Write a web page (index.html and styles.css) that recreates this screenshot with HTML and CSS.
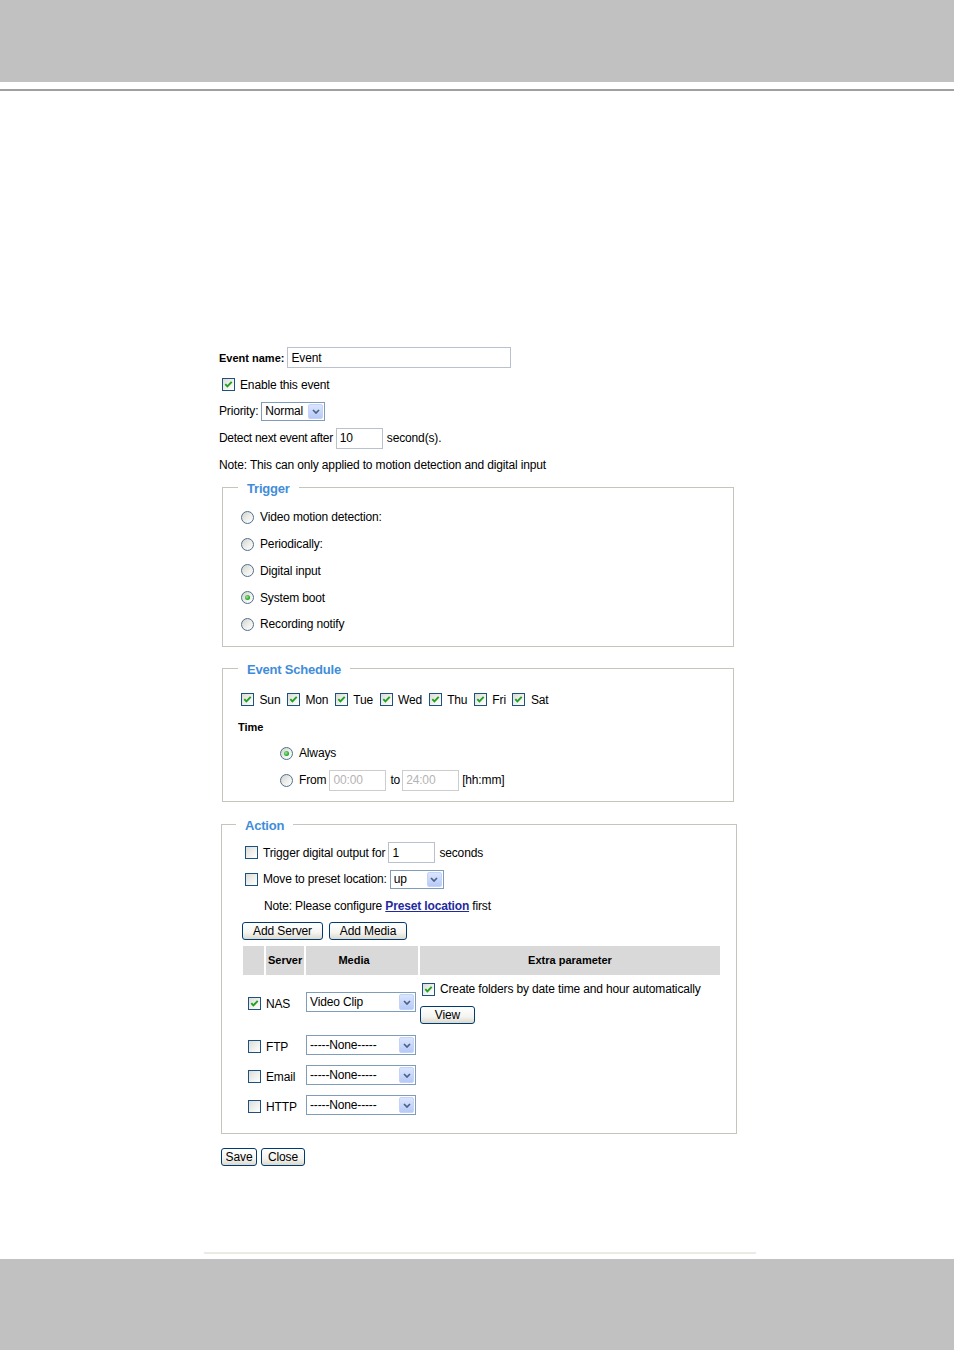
FILE: index.html
```html
<!DOCTYPE html>
<html lang="en">
<head>
<meta charset="utf-8">
<title>Event settings</title>
<link rel="stylesheet" href="styles.css">
</head>
<body>
<div class="page">
  <header class="top-band"></header>
  <div class="top-rule"></div>

  <main class="content">
    <div class="row"><span class="label-b">Event name:</span><span class="field w-name">Event</span></div>
    <div class="row pad-enable"><span class="cb on"><svg viewBox="0 0 11 11"><path d="M2.3 5.2 L4.4 7.4 L8.7 2.9"/></svg></span><span>Enable this event</span></div>
    <div class="row"><span>Priority:</span><span class="sel w-pri"><span class="sel-text">Normal</span><span class="sel-btn"><svg viewBox="0 0 8 5"><path d="M1 1 L4 4 L7 1"/></svg></span></span></div>
    <div class="row"><span class="tight-text">Detect next event after</span><span class="field w-num">10</span><span>second(s).</span></div>
    <div class="row"><span>Note: This can only applied to motion detection and digital input</span></div>

    <fieldset class="box box-trigger">
      <legend>Trigger</legend>
      <div class="row pad-radio"><span class="rb"></span><span>Video motion detection:</span></div>
      <div class="row pad-radio"><span class="rb"></span><span>Periodically:</span></div>
      <div class="row pad-radio"><span class="rb"></span><span>Digital input</span></div>
      <div class="row pad-radio"><span class="rb on"></span><span>System boot</span></div>
      <div class="row pad-radio"><span class="rb"></span><span>Recording notify</span></div>
    </fieldset>

    <fieldset class="box box-schedule">
      <legend>Event Schedule</legend>
      <div class="row pad-radio">
        <span class="day"><span class="cb on"><svg viewBox="0 0 11 11"><path d="M2.3 5.2 L4.4 7.4 L8.7 2.9"/></svg></span>Sun</span>
        <span class="day"><span class="cb on"><svg viewBox="0 0 11 11"><path d="M2.3 5.2 L4.4 7.4 L8.7 2.9"/></svg></span>Mon</span>
        <span class="day"><span class="cb on"><svg viewBox="0 0 11 11"><path d="M2.3 5.2 L4.4 7.4 L8.7 2.9"/></svg></span>Tue</span>
        <span class="day"><span class="cb on"><svg viewBox="0 0 11 11"><path d="M2.3 5.2 L4.4 7.4 L8.7 2.9"/></svg></span>Wed</span>
        <span class="day"><span class="cb on"><svg viewBox="0 0 11 11"><path d="M2.3 5.2 L4.4 7.4 L8.7 2.9"/></svg></span>Thu</span>
        <span class="day"><span class="cb on"><svg viewBox="0 0 11 11"><path d="M2.3 5.2 L4.4 7.4 L8.7 2.9"/></svg></span>Fri</span>
        <span class="day"><span class="cb on"><svg viewBox="0 0 11 11"><path d="M2.3 5.2 L4.4 7.4 L8.7 2.9"/></svg></span>Sat</span>
      </div>
      <div class="row pad-time"><span class="label-b">Time</span></div>
      <div class="row pad-always"><span class="rb on"></span><span>Always</span></div>
      <div class="row pad-always"><span class="rb"></span><span>From</span><span class="field off w-time">00:00</span><span>to</span><span class="field off w-time tight">24:00</span><span>[hh:mm]</span></div>
    </fieldset>

    <fieldset class="box box-action">
      <legend>Action</legend>
      <div class="row pad-act"><span class="cb"></span><span>Trigger digital output for</span><span class="field w-num">1</span><span>seconds</span></div>
      <div class="row pad-act"><span class="cb"></span><span>Move to preset location:</span><span class="sel w-up"><span class="sel-text">up</span><span class="sel-btn"><svg viewBox="0 0 8 5"><path d="M1 1 L4 4 L7 1"/></svg></span></span></div>
      <div class="row pad-note"><span>Note: Please configure <a class="link" href="#">Preset location</a> first</span></div>
      <div class="row btn-row">
        <button class="btn btn-server" type="button">Add Server</button>
        <button class="btn btn-media" type="button">Add Media</button>
      </div>

      <div class="media-table">
        <div class="th"></div>
        <div class="th th-server">Server</div>
        <div class="th th-media">Media</div>
        <div class="th">Extra parameter</div>

        <div class="td td-check"><span class="cb on"><svg viewBox="0 0 11 11"><path d="M2.3 5.2 L4.4 7.4 L8.7 2.9"/></svg></span></div>
        <div class="td">NAS</div>
        <div class="td"><span class="sel w-media"><span class="sel-text">Video Clip</span><span class="sel-btn"><svg viewBox="0 0 8 5"><path d="M1 1 L4 4 L7 1"/></svg></span></span></div>
        <div class="td td-extra">
          <div class="extra-line"><span class="cb on"><svg viewBox="0 0 11 11"><path d="M2.3 5.2 L4.4 7.4 L8.7 2.9"/></svg></span><span>Create folders by date time and hour automatically</span></div>
          <button class="btn btn-view" type="button">View</button>
        </div>

        <div class="td td-check"><span class="cb"></span></div>
        <div class="td">FTP</div>
        <div class="td"><span class="sel w-media"><span class="sel-text">-----None-----</span><span class="sel-btn"><svg viewBox="0 0 8 5"><path d="M1 1 L4 4 L7 1"/></svg></span></span></div>
        <div class="td"></div>

        <div class="td td-check"><span class="cb"></span></div>
        <div class="td">Email</div>
        <div class="td"><span class="sel w-media"><span class="sel-text">-----None-----</span><span class="sel-btn"><svg viewBox="0 0 8 5"><path d="M1 1 L4 4 L7 1"/></svg></span></span></div>
        <div class="td"></div>

        <div class="td td-check"><span class="cb"></span></div>
        <div class="td">HTTP</div>
        <div class="td"><span class="sel w-media"><span class="sel-text">-----None-----</span><span class="sel-btn"><svg viewBox="0 0 8 5"><path d="M1 1 L4 4 L7 1"/></svg></span></span></div>
        <div class="td"></div>
      </div>
    </fieldset>

    <div class="row save-row">
      <button class="btn btn-save" type="button">Save</button>
      <button class="btn btn-close" type="button">Close</button>
    </div>
  </main>

  <div class="bottom-rule"></div>
  <footer class="bottom-band"></footer>
</div>
</body>
</html>
```

FILE: styles.css
```css
* { box-sizing: border-box; }

html, body {
  margin: 0;
  padding: 0;
  background: #ffffff;
}

body {
  font-family: "Liberation Sans", Arial, sans-serif;
  font-size: 12px;
  letter-spacing: -0.15px;
  color: #000000;
}

.page {
  min-height: 1350px;
  display: flex;
  flex-direction: column;
}

.top-band {
  height: 82px;
  background: #c0c1c0;
}

.top-rule {
  height: 2px;
  margin-top: 7px;
  background: #a0a0a0;
}

.content {
  flex: 1;
  padding: 253.6px 0 0 219px;
}

.row {
  height: 26.75px;
  display: flex;
  align-items: center;
  white-space: nowrap;
}

.tight-text { letter-spacing: -0.3px; }

.label-b {
  font-weight: bold;
  font-size: 11px;
  letter-spacing: 0;
}

/* text fields */
.field {
  display: inline-flex;
  align-items: center;
  height: 21px;
  margin: 0 4px 0 3px;
  padding: 0 3px;
  border: 1px solid #b9c2cc;
  background: #ffffff;
}
.field.off {
  color: #b4b4b4;
  border-color: #cdcdcd;
}
.field.tight { margin-left: 2px; margin-right: 3px; }
.w-name { width: 224px; }
.w-num { width: 47px; }
.w-time { width: 57px; }

/* select boxes */
.sel {
  display: inline-flex;
  align-items: stretch;
  height: 19px;
  margin: 0 4px 0 3px;
  padding: 1px;
  border: 1px solid #7f9db9;
  background: #ffffff;
}
.sel-text {
  flex: 1;
  display: flex;
  align-items: center;
  padding-left: 2px;
}
.sel-btn {
  width: 15px;
  display: flex;
  align-items: center;
  justify-content: center;
  border: 1px solid #c3d3fd;
  border-radius: 2px;
  background: linear-gradient(#dbe5fd, #b6caf7);
}
.sel-btn svg {
  width: 8px;
  height: 5px;
  fill: none;
  stroke: #4d6185;
  stroke-width: 1.7;
}
.w-pri { width: 64px; height: 19px; }
.w-up { width: 54px; }
.w-media { width: 110px; height: 20px; margin: -3px 0 0 0; }

/* checkbox */
.cb {
  width: 13px;
  height: 13px;
  flex: none;
  display: inline-flex;
  margin-right: 6px;
  border: 1px solid #1c5180;
  background: linear-gradient(135deg, #dcdcd7 0%, #f2f2ef 60%, #ffffff 100%);
}
.cb svg {
  width: 11px;
  height: 11px;
  fill: none;
  stroke: #21a121;
  stroke-width: 1.9;
}

/* radio */
.rb {
  position: relative;
  width: 13px;
  height: 13px;
  flex: none;
  margin-right: 6px;
  border-radius: 50%;
  border: 1px solid #4f6f8f;
  background: linear-gradient(135deg, #d2d2cc 0%, #efefec 55%, #ffffff 100%);
}
.rb.on::after {
  content: "";
  position: absolute;
  left: 3px;
  top: 3px;
  width: 5px;
  height: 5px;
  border-radius: 50%;
  background: radial-gradient(circle at 40% 40%, #9de79d 0%, #2aab2a 60%, #1a8a1a 100%);
}

/* fieldsets */
.box {
  margin: 0 0 0 3px;
  padding: 0;
  min-inline-size: 0;
  border: 1px solid #c5c5bd;
}
.box legend {
  margin-left: 15px;
  padding: 3px 9px 0 9px;
  font-size: 13px;
  font-weight: bold;
  letter-spacing: -0.2px;
  line-height: 14px;
  color: #3f8dda;
}
.box-trigger {
  width: 512px;
  margin-top: 0.6px;
  padding: 8.1px 0 8.6px 0;
}
.box-schedule {
  width: 512px;
  margin-top: 13px;
  padding: 9.1px 0 8px 0;
}
.box-action {
  width: 516px;
  margin-top: 13.8px;
  margin-left: 2px;
  padding: 6.1px 0 12px 0;
}
.box-action legend { margin-left: 14px; }

.pad-enable { padding-left: 3px; }
.pad-enable .cb { margin-right: 5px; }
.pad-radio { padding-left: 18px; }
.pad-time { padding-left: 15px; }
.pad-always { padding-left: 57px; }
.pad-act { padding-left: 23px; }
.pad-act .cb { margin-right: 5px; }
.pad-note { padding-left: 42px; }

.day {
  display: inline-flex;
  align-items: center;
  margin-right: 6.5px;
}
.day .cb { margin-right: 5.5px; }

.link {
  color: #1f2a9e;
  font-weight: bold;
  text-decoration: underline;
}

/* buttons */
.btn {
  height: 18px;
  padding: 0;
  display: inline-flex;
  align-items: center;
  justify-content: center;
  font-family: "Liberation Sans", Arial, sans-serif;
  font-size: 12px;
  letter-spacing: -0.1px;
  color: #000000;
  border: 1px solid #003c74;
  border-radius: 3px;
  background: linear-gradient(#ffffff 0%, #f4f4f0 60%, #dcd8cc 100%);
}
.btn-row {
  height: 26px;
  align-items: flex-start;
  padding: 2.6px 0 0 20px;
}
.btn-server { width: 81px; margin-right: 6px; }
.btn-media { width: 78px; }
.btn-view { width: 55px; }
.btn-save { width: 36px; margin-right: 4px; }
.btn-close { width: 44px; }

.save-row {
  margin-top: 14px;
  padding-left: 2px;
  height: 18px;
}

/* media table */
.media-table {
  display: grid;
  grid-template-columns: 21px 38px 112px 300px;
  grid-template-rows: 29px 54px 28px 28px 28px;
  gap: 2px;
  margin-left: 21px;
}
.th {
  display: flex;
  align-items: center;
  justify-content: center;
  background: #d9d9d9;
  font-weight: bold;
  font-size: 11px;
  letter-spacing: 0;
}
.th-server {
  justify-content: flex-start;
  padding-left: 2px;
}
.th-media { padding-right: 16px; }
.td {
  display: flex;
  align-items: center;
  white-space: nowrap;
}
.td-check { justify-content: center; padding-left: 1px; }
.td-check .cb { margin-right: 0; }
.td-extra {
  flex-direction: column;
  align-items: flex-start;
  justify-content: center;
}
.extra-line {
  height: 18px;
  display: flex;
  align-items: center;
  padding-left: 2px;
  margin-top: -3px;
  margin-bottom: 8px;
}
.extra-line .cb { margin-right: 5px; }

.bottom-rule {
  height: 2px;
  margin: 0 198px 5px 204px;
  background: #ebebe3;
}

.bottom-band {
  height: 91px;
  background: #c0c1c0;
}
```
